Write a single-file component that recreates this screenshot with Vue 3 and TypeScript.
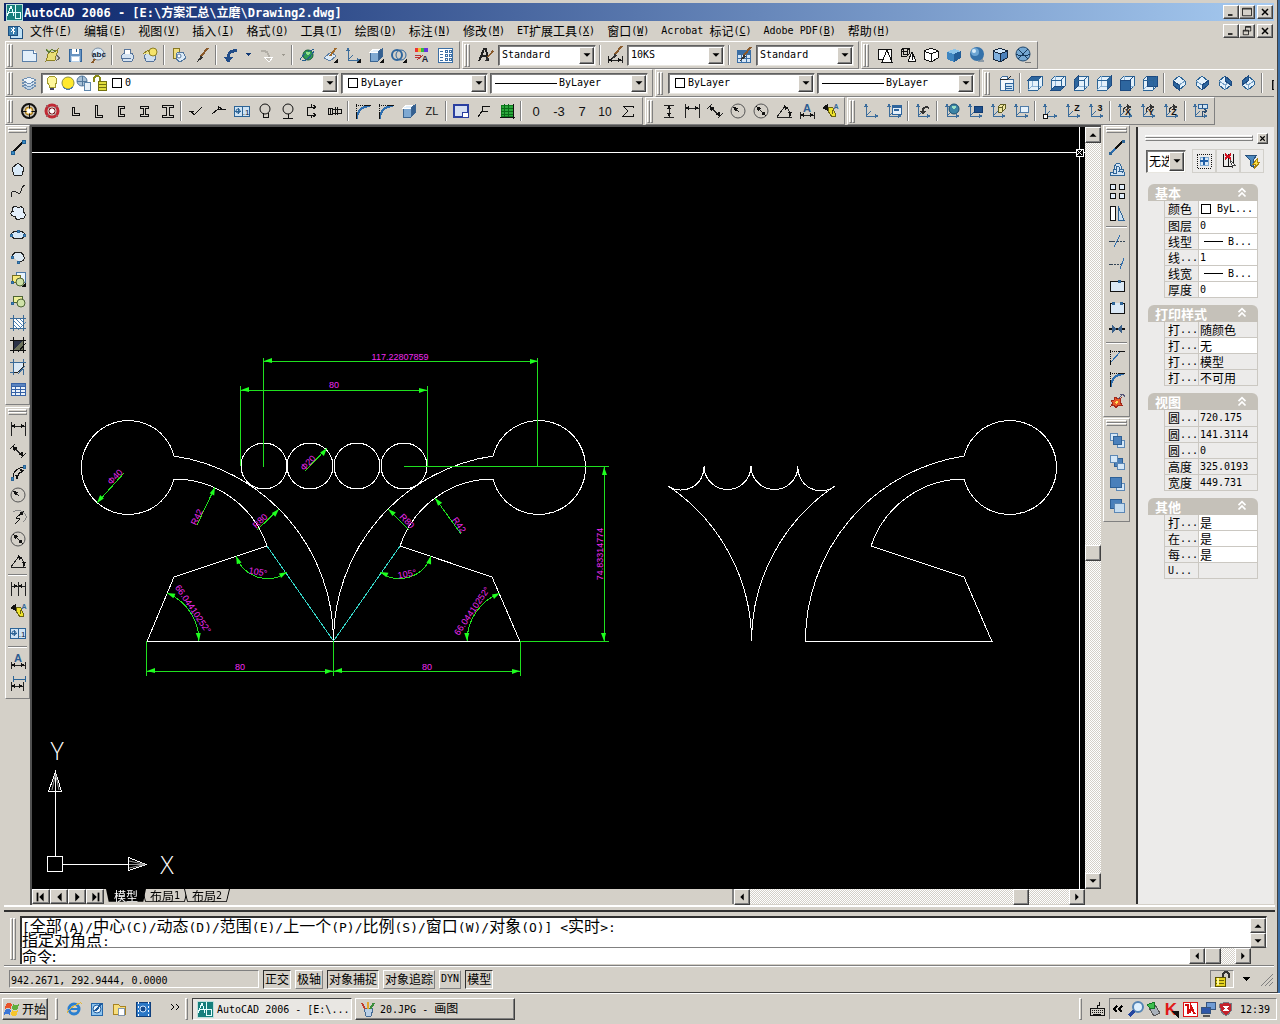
<script setup lang="ts">
import { h, ref } from 'vue'

/* Latin runs use a fixed-pitch face at half the width of a Han character. */
const T = (p: { s: string }) =>
  (p.s.match(/[\x20-\x7e]+|[^\x20-\x7e]+/g) ?? []).map((run) =>
    h('span', { class: /^[\x20-\x7e]/.test(run) ? 'latin' : 'han' }, run),
  )
T.props = ['s']

const DARK = '#222'
const BLUE = '#2c6496'
const PALE = '#cfe3f4'
const path = (d: string, stroke = DARK, fill = 'none', w = 1) =>
  `<path d="${d}" fill="${fill}" stroke="${stroke}" stroke-width="${w}"/>`
const dots = (d: string, stroke = DARK, gap = '1 1') =>
  `<path d="${d}" fill="none" stroke="${stroke}" stroke-dasharray="${gap}"/>`
const circ = (x: number, y: number, r: number, stroke = DARK, fill = 'none', w = 1) =>
  `<circle cx="${x}" cy="${y}" r="${r}" fill="${fill}" stroke="${stroke}" stroke-width="${w}" shape-rendering="auto"/>`
const box = (x: number, y: number, w: number, ht: number, stroke = DARK, fill = 'none') =>
  `<rect x="${x}" y="${y}" width="${w}" height="${ht}" fill="${fill}" stroke="${stroke}"/>`
const word = (x: number, y: number, s: string, size: number, fill = DARK, weight = 400) =>
  `<text x="${x}" y="${y}" font-size="${size}" fill="${fill}" font-weight="${weight}" text-anchor="middle" font-family="Liberation Sans, sans-serif">${s}</text>`

const faces: Record<string, string> = {
  top: 'M1 5L5 1H15L11 5z', bottom: 'M1 15L5 11H15L11 15z', left: 'M1 5L5 1V11L1 15z',
  right: 'M11 5L15 1V11L11 15z', front: 'M1 5H11V15H1z', back: 'M5 1H15V11H5z',
}
const viewCube = (f: string) =>
  path('M1 5L5 1H15V11L11 15H1z', BLUE, '#e4f1fb') + path('M5 1V11H15M5 11L1 15', '#8db4d6') +
  path(faces[f], '#1d4a80', '#2d669f') + path('M1 5H11V15M11 5L15 1', f === 'front' ? '#1d4a80' : BLUE)
const isoFaces: Record<string, string> = {
  sw: 'M2 6L8 10V15L2 10z', se: 'M14 6L8 10V15L14 10z', ne: 'M8 1L14 6V10L8 6z', nw: 'M8 1L2 6V10L8 6z',
}
const isoCube = (f: string) =>
  path('M8 1L14 6V10L8 15L2 10V6z', BLUE, '#e4f1fb') + path('M2 6L8 10L14 6M8 10V15', '#7ba4c8') +
  path(isoFaces[f], '#1d4a80', '#2d669f')
const ucs = (extra = '') =>
  path('M3 2V13H14M3 13L8 8', '#3c6d9c') + path('M3 0L5 4H1zM16 13L12 11V15z', 'none', '#3c6d9c') + extra
const dimH = path('M1 1V15M15 1V15M1 5H15') + path('M1 5L5 3V7zM15 5L11 3V7z', 'none', '#111')
const solid = path('M2 5L6 2H14V10L10 14H2z', '#3b6592', '#7fa9d2') + path('M2 5L6 2H14L10 5z', '#fff', '#e2effa') + path('M10 5V14L14 10V2z', '#3b6592', '#345f90')
const corner = path('M11 16H16V11z', 'none', '#111')
const brush = (x = 0, y = 0) => `<g transform="translate(${x} ${y})">${path('M14 1L7 9', '#8a5a2b', 'none', 2)}${path('M7 8L3 15L9 11z', 'none', '#333')}</g>`
const hatch = path('M3 0V16M13 0V16M0 3H16M0 13H16', '#3a6a98')
const aligned = path('M0 6L5 1M11 15L16 10M3 4L13 13') + path('M2 3L8 5L4 8zM14 13L8 12L12 8z', 'none', '#111')
const leader = path('M1 5L5 2V7zM3 5L9 6', '#111', '#111') + path('M6 4L11 5L14 13L10 14L6 8z', '#6b6410', '#efe32b') + path('M10 7V11', '#6b6410') + word(14, 6, 'A', 7, BLUE, 700)
const tolerance = box(0, 3, 15, 10, BLUE, PALE) + path('M8 3V13M4 5V11M1 8H7', BLUE) + circ(4, 8, 2, BLUE) + word(12, 12, '.1', 8, '#123')
const angle = path('M1 14H16M1 14L9 3') + path('M9 3Q14 6 14 14') + path('M8 2L13 5L9 7zM14 14L12 9H16z', 'none', '#111')
const textDim = word(8, 9, 'A', 11, '#2d5c91', 700) + path('M1 9V16M15 9V16M1 12H15') + path('M1 12L5 10V14zM15 12L11 10V14z', 'none', '#111')
const radius = circ(8, 8, 7, '#555') + path('M9 9L4 5') + path('M3 4L8 5L5 8z', 'none', '#111')
const diameter = circ(8, 8, 7, '#555') + path('M4 4L12 12') + path('M3 3L8 5L5 8zM13 13L8 11L11 8z', 'none', '#111')
const spin = path('M6 9Q6 3 12 4', '#333') + path('M10 1L15 4L10 7z', 'none', '#333')

const icons: Record<string, string> = {
  new: path('M1 3H12L15 6V14H1z', '#5b7fa8', '#e3effa') + path('M12 3V6H15', '#5b7fa8', '#fff'),
  open: path('M2 14L5 4L9 6L14 2L11 13z', '#8d8022', '#eadf77') + path('M2 2L5 6L8 2L12 5', '#5d7a3c', '#b6cc80') + path('M12 8L16 11L12 14', '#666'),
  save: box(2, 2, 12, 12, '#33659c', '#6793c1') + box(5, 2, 6, 4, '#fff', '#fff') + box(4, 9, 8, 5, '#b9d2ea', '#fff') + path('M9 2V5', BLUE),
  spelling: circ(8, 7, 6, '#7b8fa5', '#dcebf7') + word(9, 10, 'abc', 8, '#123', 700) + path('M5 12L2 16', '#8a5a2b', 'none', 2),
  print: path('M2 9L5 6H13L15 10L13 14H4z', '#56749b', '#d5e3f1') + path('M5 7L6 2H11L12 7', '#56749b', '#fff') + path('M4 11H12', '#56749b'),
  preview: path('M2 9L5 6H12L14 11L12 14H4z', '#56749b', '#cfdff0') + circ(11, 5, 4, '#8d7f25', '#f5e36b') + path('M1 7L6 3L8 7', '#8d7f25', '#ede38d'),
  publish: path('M2 2L8 1L10 11L3 12z', '#887822', '#f0df81') + path('M6 6L12 5L15 11L9 15L5 12z', '#54789f', '#dcebf8') + circ(8, 9, 2, '#54789f', '#fff'),
  match: brush(),
  undo: path('M6 15C4 8 6 3 14 4', '#214c88', 'none', 3) + path('M1 10H10L5 16z', 'none', '#214c88'),
  redo: path('M10 14C12 8 10 3 3 4', '#b2aea6', 'none', 2) + path('M6 10H15L11 15z', '#fff', '#c6c2ba'),
  drop: path('M5 6H11L8 9z', 'none', '#123a75'),
  dropOff: path('M6 7H10L8 9z', 'none', '#9c988f'),
  web: circ(9, 8, 5, '#165b36', '#2f9b55') + path('M1 13Q4 6 15 2M3 14Q9 14 15 4', '#245d8c') + path('M6 6Q9 3 11 6L9 9z', 'none', '#8fe08c'),
  sheet: path('M2 11L9 5L14 9L8 14z', '#5d7fa5', '#dfecf8') + path('M14 1L8 9', '#a06a2c', 'none', 2) + corner,
  ucsFly: ucs() + corner,
  solidFly: solid + corner,
  rings: circ(6, 8, 5, '#2f669d', 'none', 2) + circ(10, 8, 5, '#2f669d') + corner,
  props: box(1, 1, 3, 4, 'none', '#e33') + box(4, 1, 3, 4, 'none', '#eb3') + box(7, 1, 3, 4, 'none', '#3b4') + box(10, 1, 4, 4, 'none', '#63d') + path('M1 8H7M1 10H7M3 13L9 8', '#b33') + word(11, 15, 'A', 9, '#223', 700),
  calc: box(1, 1, 14, 14, '#3b6fa5', '#fff') + path('M3 4H6M3 7H6M3 10H6M3 13H6', '#3b6fa5') + box(8, 3, 2, 2, '#3b6fa5') + box(12, 3, 2, 2, '#3b6fa5') + box(8, 7, 2, 2, '#3b6fa5') + box(12, 7, 2, 2, '#3b6fa5') + box(8, 11, 2, 2, '#3b6fa5') + box(12, 11, 2, 2, '#3b6fa5'),
  textStyle: path('M1 14L6 2H8L10 14M3 9H9', DARK, 'none', 2) + `<g transform="translate(4 3) scale(.8)">${brush()}</g>`,
  dimStyle: path('M1 9V16M15 9V16M1 13H15') + path('M1 13L5 11V15zM15 13L11 11V15z', 'none', '#111') + brush(1, -2),
  tableStyle: box(1, 3, 13, 12, '#3b6fa5', '#d5e6f6') + path('M1 7H14M1 11H14M5 3V15M10 3V15', '#3b6fa5') + box(1, 3, 13, 3, '#3b6fa5', '#3b6fa5') + brush(1, -1),
  wire2: box(1, 2, 13, 10, '#111', '#fff') + path('M5 15L10 3L15 15z', '#111', '#fff', 1),
  wire3: path('M1 4L3 1H9V7L7 9H1zM1 4H7V9M7 4L9 1M3 1V7H9', '#111') + path('M8 14L12 5L16 14Q12 16 8 14M12 5V13', '#111', '#fff'),
  hidden: path('M1 4L8 1L15 4V11L8 15L1 12z', '#111', '#fff') + path('M1 4L8 7L15 4M8 7V15', '#111'),
  flat: path('M1 5L8 2L15 4V11L8 15L1 12z', 'none', '#3f86c1') + path('M1 5L8 2L15 4L8 7z', 'none', '#8cc4ea') + path('M8 7L15 4V11L8 15z', 'none', '#235f9a'),
  gour: path('M8 15H15L14 10', 'none', '#8c9aa6') + circ(8, 7, 7, 'none', '#3572aa') + circ(6, 5, 4, 'none', '#6ca5d3') + circ(5, 4, 2, 'none', '#d6ecfb'),
  flatEdge: path('M1 4L8 1L15 4V11L8 15L1 12z', '#14263c', '#7fb0de') + path('M1 4L8 1L15 4L8 7z', '#14263c', '#cfe5f8') + path('M8 7L15 4V11L8 15z', '#14263c', '#4a80ba'),
  gourEdge: circ(8, 7, 7, '#20476d', '#76a9d3') + path('M3 2L13 12M13 2L3 12M1 7Q8 11 15 7', '#173a5c') + path('M10 15H16', '#777'),
  layers: path('M1 11L9 8L15 11L8 15z', '#6f8fb2', '#c1d5e8') + path('M1 8L9 5L15 8L8 12z', '#6f8fb2', '#d6e4f2') + path('M1 5L8 2L15 5L8 9z', '#6f8fb2', '#ecf4fb'),
  bulb: path('M5 10C1 5 4 1 8 1S15 5 11 10V12H5z', '#a29a2e', '#fff79b') + path('M6 14H10', '#446', 'none', 2),
  sun: circ(8, 8, 6, '#8a8f3f', '#ffe92e', 1) + path('M3 12Q8 17 13 12', '#487db0'),
  sunVp: circ(6, 6, 5, '#52779b', '#a8c1d6') + path('M6 1V11M1 6H11', '#52779b') + box(8, 7, 6, 8, '#5e86ab', '#e8f1f8'),
  lock: path('M2 7V4Q2 1 5 1T8 4V6', '#8a8a16', 'none', 2) + box(6, 6, 8, 9, '#74720e', '#e1dc3b') + path('M6 9H14M6 12H14', '#74720e'),
  white: box(4, 3, 9, 9, '#000', '#fff'),
  named: path('M2 4L5 1H9L10 4H15V15H2z', '#3f6d9c', '#f2f7fc') + path('M2 4H10L13 1', DARK) + box(7, 8, 8, 7, '#2e649c', '#cfe3f4') + path('M8 11H14M8 13H14', '#2e649c'),
  camera: box(3, 5, 6, 9, '#111', '#777') + path('M5 3H9', '#111', 'none', 2),
  gear1: circ(8, 8, 7, '#111', '#c9c4ba', 2) + circ(8, 8, 4, '#9a7420', '#f2c763') + path('M8 0V16M0 8H16', '#111') + circ(8, 8, 2, '#fff', '#fff'),
  gear2: circ(8, 8, 6, '#c02a35', '#cfcbc4', 3) + circ(8, 8, 3, '#7c0e18', '#e7dfdc') + path('M2 2L14 14M14 2L2 14', '#8b6a70') + circ(8, 8, 2, '#fff', '#fff'),
  angleS: path('M5 4H7V10H12V12H5z', '#111'), angleL: path('M5 2H7V12H12V14H5z', '#111'),
  channel: path('M11 3H5V13H11V11H7V5H11z', '#111'), beamS: path('M4 3H12V5H9V11H12V13H4V11H7V5H4z', '#111'),
  beamL: path('M3 2H14V4H10V12H14V14H3V12H7V4H3z', '#111'),
  surf: path('M1 8H6M3 8L6 12L14 4', '#111'), weld: path('M1 11L7 6H15M7 6V3L11 6', '#111'),
  datum: circ(8, 6, 5, '#111') + path('M6 10V14H11V10', '#111'), datum2: circ(8, 6, 5, '#111') + path('M8 11V15M3 15H13', '#111'),
  cut: path('M4 4V12M4 4H12M4 12H12M10 2L13 4L10 6M10 10L13 12L10 14M8 1V4M8 12V15', '#111'),
  bolt: path('M2 5H6V11H2zM6 6H15V10H6M9 4V12M11 4V12M4 5V11', '#111'),
  fillet: path('M2 16Q2 4 15 3', '#2f6fb0', 'none', 2) + dots('M1 2H16M1 1V12', '#111') + path('M10 2H16M1 10V16', '#111'),
  chamfer: path('M2 13L11 3', '#2f6fb0') + dots('M1 2H16M1 1V12', '#111') + path('M10 2H16M1 12V16', '#111'),
  block: solid, zl: word(8, 12, 'ZL', 11, '#111'),
  layout: path('M1 2H15V14H1z', '#2a3fa0', '#d6e0f2', 2) + box(9, 9, 6, 5, '#2a3fa0', '#fff'),
  leadF: path('M2 14L6 8V3H14M6 8H12', '#111'),
  grid: box(2, 2, 12, 11, '#0c7a1c', '#2aa83b') + path('M2 5H14M2 8H14M2 11H14M5 1V15M9 1V15', '#0a6a18') + path('M14 1V16M1 14H16', '#111'),
  n0: word(8, 13, '0', 13, '#111'), n3: word(8, 13, '-3', 13, '#111'), n7: word(8, 13, '7', 13, '#111'),
  n10: word(8, 13, '10', 12, '#111'), sum: path('M13 5V3H3L8 8L3 13H13V11', '#111'),
  dimV: path('M3 2H13M3 14H13M8 2V14') + path('M8 2L6 6H10zM8 14L6 10H10z', 'none', '#111'),
  dimH, aligned, radius, diameter, angle, textDim, leader, tolerance,
  ucs: ucs(), ucsDlg: ucs(box(6, 2, 9, 9, '#2e649c', '#e5f0fa') + path('M6 4H15M8 7H13', '#2e649c', 'none', 2)),
  ucsPrev: ucs(path('M8 10C7 5 10 3 14 5', '#333', 'none', 2) + path('M5 8H11L8 12z', 'none', '#333')),
  ucsWorld: ucs(circ(10, 6, 5, '#174b6e', '#3b83a5') + path('M7 4Q10 1 12 4L10 7z', 'none', '#9be0c4')),
  ucsObj: ucs(box(7, 3, 8, 6, '#123b70', '#1d4f8c')),
  ucsFace: ucs(path('M8 4L11 1H15V6L12 9H8z', '#5d5b22', '#efe6a0') + path('M8 4H12V9M12 4L15 1', '#5d5b22')),
  ucsView: ucs(box(7, 3, 8, 6, '#4f7ba7', '#e5f1fb')), ucsOrigin: ucs(box(1, 11, 4, 4, '#111', '#fff')),
  ucsZ: ucs(word(12, 8, 'Z', 9, '#111', 700)), ucs3: ucs(word(12, 8, '3', 9, '#111', 700)),
  rotX: ucs(word(11, 12, 'X', 9, '#111', 700) + spin),
  rotY: ucs(word(11, 12, 'Y', 9, '#111', 700) + spin),
  rotZ: ucs(word(11, 12, 'Z', 9, '#111', 700) + spin),
  ucsApply: ucs(box(6, 1, 9, 4, '#2e649c', '#cfe3f4') + path('M10 1V5M10 14V8H14M12 6L15 8L12 10', '#2b4c70')),
  line: path('M3 13L13 3', '#111', 'none', 2) + box(1, 12, 3, 3, '#1f5f93', '#3a8cc4') + box(12, 1, 3, 3, '#1f5f93', '#3a8cc4'),
  polygon: path('M8 2L14 7L12 14H4L2 7z', '#222', '#d9e9f7'),
  spline: path('M1 14C2 0 9 16 11 8Q12 3 15 2', '#222'),
  cloud: path('M5 11C0 12 0 6 3 6C0 2 6 0 8 3C12 0 15 4 13 7C17 9 15 15 11 13C9 17 5 14 5 11', '#222', '#e4effa', 1),
  ellipse: `<ellipse cx="8" cy="8" rx="7" ry="4" fill="#d4e6f6" stroke="#222"/>` + box(0, 7, 2, 2, BLUE, '#3a8cc4') + box(13, 7, 2, 2, BLUE, '#3a8cc4') + box(7, 3, 2, 2, BLUE, '#3a8cc4'),
  ellArc: path('M2 8Q3 3 8 3T14 8T9 12', '#222', '#dde9f3') + box(1, 7, 2, 2, BLUE, '#3a8cc4') + box(7, 12, 2, 2, BLUE, '#3a8cc4'),
  insert: box(6, 1, 9, 10, '#4f7ba7', '#e7f2fb') + box(2, 4, 8, 7, '#756e1f', '#f7ea7e') + circ(10, 11, 4, '#4c6333', '#cfe1a8') + box(1, 10, 2, 2, BLUE, '#3a8cc4') + corner,
  makeBlock: box(3, 3, 9, 6, '#4c6333', '#eef099') + circ(11, 10, 4, '#4c6333', '#cfe1a8') + box(1, 9, 2, 2, BLUE, '#3a8cc4'),
  hatch: box(3, 3, 10, 10, '#fff', '#fff') + path('M3 9L7 13M3 5L11 13M5 3L13 11M9 3L13 7M8 15L16 7', '#4f81b0') + hatch,
  gradient: box(3, 3, 10, 10, '#111', '#6d725b') + path('M3 3H13L3 13z', 'none', '#2b3247') + path('M3 0V16M13 0V16M0 3H16M0 13H16M8 15L16 6', '#111'),
  region: path('M3 3H13V8L8 13H3z', '#222', '#dbe9f6') + path('M3 0V16M0 3H16M13 0V3M0 13H3M8 15L15 7M13 10V16', '#3a6a98'),
  table: box(1, 2, 14, 12, '#3662a6', '#eaf2fb') + box(1, 2, 14, 3, '#3662a6', '#5b84c0') + path('M1 8H15M1 11H15M5 5V14M10 5V14', '#3662a6'),
  arcLen: path('M3 13Q3 4 13 2', '#111') + path('M7 14Q7 8 13 6', '#111') + path('M7 15L5 10H9zM14 5L10 4L11 8z', 'none', '#111') + box(1, 12, 2, 3, BLUE, '#3a8cc4') + box(13, 0, 2, 3, BLUE, '#3a8cc4'),
  jog: path('M3 3Q9 -1 14 4T13 13', '#888') + path('M5 15L10 10L6 9L13 3', '#111') + path('M14 2L9 4L12 7z', 'none', '#111'),
  quick: path('M1 1V15M8 1V15M15 1V15M1 5H15') + path('M8 5L4 3V7zM8 5L12 3V7z', 'none', '#111'),
  dimUpd: path('M3 1V7M15 1V7M3 4H15', BLUE) + path('M1 7V16M13 7V16M1 11H13') + path('M1 11L5 9V13zM13 11L9 9V13z', 'none', '#111'),
  lineMod: path('M2 14L6 10', '#2f6fb0', 'none', 2) + path('M6 10L13 3', '#111', 'none', 2) + box(13, 1, 2, 2, BLUE, BLUE) + box(0, 13, 2, 2, BLUE, BLUE),
  offset: path('M1 14V11H4Q4 8 6 8Q5 2 9 2T12 8Q15 8 15 11V14z', '#2f6496', '#d2e4f4') + path('M4 12H7V9Q7 5 9 5T10 10H13V12', '#2f6496'),
  array: box(1, 1, 5, 5, '#111', '#e2eefa') + box(10, 1, 5, 5, '#111', '#e2eefa') + box(1, 10, 5, 5, '#111', '#e2eefa') + box(10, 10, 5, 5, '#111', '#e2eefa'),
  mirror: path('M1 1H6V15H1z', '#111', '#fff') + path('M9 1V15H15z', '#2f6496', '#cbdff1'),
  trim: path('M0 8H6', '#345') + dots('M8 8H16', '#345', '2 1') + path('M5 14L11 2', '#2f6fb0'),
  extend: path('M0 9H4', '#345') + dots('M5 9H12', '#345', '2 1') + path('M11 14L15 3', '#2f6fb0'),
  breakPt: box(1, 4, 14, 10, '#111', '#dbe9f6') + box(9, 3, 2, 2, BLUE, '#3a6da3'),
  breakAt: path('M4 4H1V14H15V4H12', '#111', '#dbe9f6') + box(3, 3, 2, 2, BLUE, '#3a6da3') + box(11, 3, 2, 2, BLUE, '#3a6da3'),
  join: path('M0 8H16', '#111', 'none', 2) + path('M8 8L3 4V12zM8 8L13 4V12z', 'none', '#3b618b'),
  explode: path('M2 8L5 7L6 4L9 6L12 5L11 9L13 12L9 12L7 15L5 12L2 13L4 10z', '#a3271a', '#e85a2a') + path('M5 9L9 8L8 12z', 'none', '#ffe35a') + path('M9 6L14 1M14 1L16 4M14 1L11 2', '#557'),
  front: box(1, 1, 7, 7, '#5c87b4', '#d5e7f7') + box(8, 8, 7, 7, '#5c87b4', '#d5e7f7') + box(4, 4, 8, 8, '#2e6096', '#4a80bb'),
  back: box(5, 4, 8, 8, '#2e6096', '#4a80bb') + box(1, 1, 7, 7, '#5c87b4', '#d5e7f7') + box(8, 9, 7, 6, '#5c87b4', '#d5e7f7'),
  above: box(7, 7, 8, 7, '#5c87b4', '#d5e7f7') + box(1, 1, 11, 10, '#2e6096', '#4a80bb'),
  under: box(1, 1, 11, 9, '#2e6096', '#4a80bb') + box(5, 5, 10, 9, '#5c87b4', '#c5dcf0'),
  pickAdd: dots('M1 1H15V15H1z', '#111') + box(4, 4, 8, 8, '#7fa9d2', '#d5e7f7') + path('M8 4V12M4 8H12', '#205ea6', 'none', 2),
  pickObj: path('M3 1V13H13M13 1V13M8 1V13', '#111') + path('M5 1L11 6M11 1L5 6', '#d01020', 'none', 2) + path('M10 7L15 12L12 12L13 15z', '#444', '#fff'),
  quickSel: path('M1 2H13L9 7V14L6 12V7z', '#27517c', '#4d88be') + path('M13 6L9 11H12L10 16L16 9H13z', '#a78312', '#ffe23c'),
  acad: box(0, 0, 16, 16, '#bfe0dd', '#167f7c') + path('M1 12L5 2L8 12M3 8H11M9 1V8H15M9 8V14H14V9', '#e8ffff'),
  doc: path('M2 3H11L14 6V15H2z', '#1d4f80', '#bfe0f4') + path('M0 3H9V12H0z', '#1d4f80', '#3a80b0') + path('M3 5L7 9M7 5L3 9M5 4V11', '#fff'),
  flag: path('M2 3Q5 1 8 3L7 8Q4 6 1 8z', 'none', '#e8532a') + path('M9 3Q12 5 15 3L14 8Q11 10 8 8z', 'none', '#5fae3c') + path('M1 9Q4 7 7 9L6 14Q3 12 0 14z', 'none', '#3c77d6') + path('M8 9Q11 11 14 9L13 14Q10 16 7 14z', 'none', '#f5c52c'),
  ie: circ(8, 8, 5, '#2a7fd0', 'none', 3) + path('M4 8H12', '#2a7fd0', 'none', 2) + path('M1 13Q0 10 8 5T15 3', '#e2b83a'),
  desktop: box(2, 2, 11, 12, '#2467ab', '#8ec4ee') + circ(8, 8, 4, '#1e5a9c', '#e8f4fd') + path('M6 10L13 2', '#1e5a9c', 'none', 2),
  folder: path('M1 3H6L8 5H13V13H1z', '#a88320', '#f8de7c') + path('M6 7H12V14H6z', '#8397ad', '#fff'),
  media: box(1, 1, 14, 14, '#103f7c', '#2b77c5') + dots('M3 1V15M13 1V15', '#fff', '2 2') + circ(8, 8, 3, '#cfe6ff', '#164a8d'),
  paint: path('M4 7L13 8L11 15H6z', '#446a94', '#b9cfe6') + path('M5 8L2 2', '#c13a2b', 'none', 2) + path('M8 8V1', '#e3a42a', 'none', 2) + path('M10 8L14 2', '#3b8d3c', 'none', 2),
  keyboard: path('M1 7H15V14H1zM8 7V4H10V1', '#111') + dots('M3 9H14M3 11H14', '#111') + path('M4 13H12', '#111'),
  search: circ(10, 6, 5, '#5585b5', '#dff1ff', 2) + path('M6 10L1 15', '#2447a0', 'none', 3),
  plug: path('M3 7L9 4L14 12L8 15z', '#555', '#a9b1ba') + path('M1 4L8 1L9 7L5 8z', '#157a26', '#3fbe4e'),
  kasper: word(7, 14, 'K', 17, '#e01818', 700) + path('M8 10H14V16zM8 10L14 15', '#111', '#111'),
  avira: box(1, 1, 14, 14, '#e01414', '#fff') + path('M3 4H6V13M8 12L9 5L12 12M10 9L13 13', '#d40d0d', 'none', 2),
  net: box(6, 1, 9, 7, '#36547e', '#6f9bd4') + box(1, 6, 9, 6, '#36547e', '#2e57a8') + path('M3 15H10', '#555', 'none', 2),
  shield: path('M8 1L14 3Q15 11 8 15Q1 11 2 3z', '#757b85', '#c3222c') + path('M6 5L10 10M10 5L6 10', '#fff', 'none', 2),
  lockTray: path('M9 7V4Q9 1 12 1T15 5V7', '#333', 'none', 2) + box(1, 6, 10, 9, '#5d5403', '#e5d322') + path('M2 9H10M2 12H10', '#6e6405') + path('M4 7V14', '#fff9a0', 'none', 2),
  first: path('M11 3L6 8L11 13z', 'none', '#000') + path('M4 3V13', '#000', 'none', 2), prev: path('M11 3L6 8L11 13z', 'none', '#000'),
  next: path('M6 3L11 8L6 13z', 'none', '#000'), last: path('M5 3L10 8L5 13z', 'none', '#000') + path('M12 3V13', '#000', 'none', 2),
  up: path('M4 10H12L8 6z', 'none', '#000'), down: path('M4 6H12L8 10z', 'none', '#000'),
  left: path('M10 4V12L6 8z', 'none', '#000'), rightA: path('M6 4V12L10 8z', 'none', '#000'),
  min: path('M4 12H10', '#000', 'none', 2), max: path('M2 3H14V13H2zM2 4H14', '#000'), close: path('M4 4L12 12M12 4L4 12', '#000', 'none', 2),
  restore: path('M6 2H13V8H11M6 3H13M3 7H10V13H3zM3 8H10M6 2V7', '#000'),
  more: path('M3 3L6 6L3 9M8 3L11 6L8 9', '#000', 'none', 1), less: path('M7 5L4 8L7 11M12 5L9 8L12 11', '#000', 'none', 2),
  chev: path('M4 7L8 3L12 7M4 12L8 8L12 12', '#fff', 'none', 2),
  sizer: path('M3 15L15 3M7 15L15 7M11 15L15 11', '#808080', 'none', 1),
}
for (const f of Object.keys(faces)) icons['v_' + f] = viewCube(f)
for (const f of Object.keys(isoFaces)) icons['i_' + f] = isoCube(f)

interface Combo { w: number; text: string; name: string; icons?: string[]; stroke?: boolean }
const combos: Record<string, Combo> = {
  '#text': { w: 98, text: 'Standard', name: 'Text style' },
  '#dim': { w: 98, text: '10KS', name: 'Dimension style' },
  '#table': { w: 98, text: 'Standard', name: 'Table style' },
  '#layer': { w: 298, text: '0', name: 'Layer', icons: ['bulb', 'sun', 'sunVp', 'lock', 'white'] },
  '#color': { w: 147, text: 'ByLayer', name: 'Color', icons: ['white'] },
  '#ltype': { w: 158, text: 'ByLayer', name: 'Linetype', stroke: true },
  '#color2': { w: 147, text: 'ByLayer', name: 'Plot color', icons: ['white'] },
  '#lweight': { w: 158, text: 'ByLayer', name: 'Lineweight', stroke: true },
}
const rows = [
  ['new open save spelling | print preview | publish match | undo drop redo dropOff | web sheet ucsFly solidFly rings props calc',
    'textStyle #text | dimStyle #dim | tableStyle #table', 'wire2 wire3 hidden flat gour flatEdge gourEdge'],
  ['layers #layer #color #ltype', '#color2 #lweight',
    'named | v_top v_bottom v_left v_right v_front v_back | i_sw i_se i_ne i_nw | camera'],
  ['gear1 gear2 angleS angleL channel beamS beamL | surf weld tolerance datum datum2 cut bolt | fillet fillet block zl | layout leadF grid | n0 n3 n7 n10 sum',
    'dimV dimH aligned radius diameter angle textDim leader',
    'ucs ucsDlg | ucsPrev | ucsWorld ucsObj ucsFace ucsView | ucsOrigin ucsZ ucs3 | rotX rotY rotZ | ucsApply'],
].map((r) => r.map((b) => b.split(' ')))
const leftBars = [
  'line polygon spline cloud ellipse ellArc insert makeBlock hatch gradient region table',
  'dimH aligned arcLen radius jog diameter angle | quick leader tolerance | textDim dimUpd',
].map((b) => b.split(' '))
const rightBars = [
  'lineMod offset array mirror | trim extend breakPt breakAt join | chamfer fillet explode',
  'front back above under',
].map((b) => b.split(' '))

const menus = [
  ['文件', 'F'], ['编辑', 'E'], ['视图', 'V'], ['插入', 'I'], ['格式', 'O'], ['工具', 'T'], ['绘图', 'D'],
  ['标注', 'N'], ['修改', 'M'], ['ET扩展工具', 'X'], ['窗口', 'W'], ['Acrobat 标记', 'C'], ['Adobe PDF', 'B'], ['帮助', 'H'],
]

interface Prop { k: string; v: string; edit?: boolean; mark?: 'box' | 'line' }
const groups: { title: string; rows: Prop[] }[] = [
  { title: '基本', rows: [
    { k: '颜色', v: 'ByL...', edit: true, mark: 'box' }, { k: '图层', v: '0', edit: true },
    { k: '线型', v: 'B...', edit: true, mark: 'line' }, { k: '线...', v: '1', edit: true },
    { k: '线宽', v: 'B...', edit: true, mark: 'line' }, { k: '厚度', v: '0', edit: true } ] },
  { title: '打印样式', rows: [
    { k: '打...', v: '随颜色' }, { k: '打...', v: '无', edit: true }, { k: '打...', v: '模型' }, { k: '打...', v: '不可用' } ] },
  { title: '视图', rows: [
    { k: '圆...', v: '720.175' }, { k: '圆...', v: '141.3114' }, { k: '圆...', v: '0' }, { k: '高度', v: '325.0193' }, { k: '宽度', v: '449.731' } ] },
  { title: '其他', rows: [
    { k: '打...', v: '是', edit: true }, { k: '在...', v: '是', edit: true }, { k: '每...', v: '是', edit: true }, { k: 'U...', v: '' } ] },
]

const modes = ref([
  { s: '正交', on: true }, { s: '极轴', on: false }, { s: '对象捕捉', on: true },
  { s: '对象追踪', on: false }, { s: 'DYN', on: false }, { s: '模型', on: true },
])
const command = ref('命令:')

/* Dimension arrowheads: tip x, tip y, direction in degrees. */
const arrows = [
  [264, 361, 180], [538, 361, 0], [241, 390, 180], [427, 390, 0], [604, 467, -90], [604, 641, 90],
  [147, 671, 180], [333, 671, 0], [334, 671, 180], [520, 671, 0], [97, 503, 132], [327, 448, -48],
  [215, 487, -64], [279, 509, -44], [388, 509, -136], [435, 498, -126], [236, 556, -110], [287, 572, -25],
  [431, 556, -70], [380, 572, -155], [167, 593, -155], [199, 641, 88], [500, 593, -25], [467, 641, 92],
]
/* Dimension labels: centre x, centre y, angle, text. */
const labels: [number, number, number, string][] = [
  [400, 357, 0, '117.22807859'], [334, 385, 0, '80'], [240, 667, 0, '80'], [427, 667, 0, '80'],
  [600, 554, -90, '74.83314774'], [115, 477, -47, 'Φ40'], [308, 463, -47, 'Φ20'], [197, 517, -64, 'R42'],
  [260, 521, -44, 'R80'], [407, 521, 46, 'R80'], [459, 525, 54, 'R42'], [258, 572, 10, '105°'],
  [407, 574, -10, '105°'], [193, 609, 56, '66.04410252°'], [472, 611, -56, '66.04410252°'],
]
</script>

<template>
  <div class="desktop">
    <div class="window">
      <header class="title">
        <svg class="ic" viewBox="0 0 16 16" v-html="icons.acad" />
        <h1><T s="AutoCAD 2006 - [E:\方案汇总\立磨\Drawing2.dwg]" /></h1>
        <button v-for="b in ['min', 'max', 'close']" :key="b" class="cap" :class="b" :aria-label="b">
          <svg viewBox="0 0 16 16" v-html="icons[b]" />
        </button>
      </header>

      <nav class="menu">
        <svg class="ic" viewBox="0 0 16 16" v-html="icons.doc" />
        <button v-for="m in menus" :key="m[1]" class="item">
          <T :s="m[0]" /><span class="latin">(<u>{{ m[1] }}</u>)</span>
        </button>
        <span class="grow" />
        <button v-for="b in ['min', 'restore', 'close']" :key="b" class="cap" :class="b" :aria-label="'document ' + b">
          <svg viewBox="0 0 16 16" v-html="icons[b]" />
        </button>
      </nav>

      <div v-for="(row, ri) in rows" :key="ri" class="row">
        <div v-for="(bar, bi) in row" :key="bi" class="bar">
          <span class="grip"><i /><i /></span>
          <template v-for="(it, i) in bar" :key="i">
            <span v-if="it === '|'" class="sep" />
            <div v-else-if="combos[it]" class="combo" :style="{ width: combos[it].w + 'px' }">
              <svg v-for="n in combos[it].icons ?? []" :key="n" class="ic" viewBox="0 0 16 16" v-html="icons[n]" />
              <span v-if="combos[it].stroke" class="stroke" />
              <select :aria-label="combos[it].name"><option>{{ combos[it].text }}</option></select>
              <span class="arrow raised"><svg viewBox="0 0 16 16" v-html="icons.down" /></span>
            </div>
            <button v-else class="tool" :class="{ narrow: it.startsWith('drop') }" :aria-label="it">
              <svg class="ic" viewBox="0 0 16 16" v-html="icons[it]" />
            </button>
          </template>
        </div>
      </div>

      <div class="main">
        <aside class="side">
          <div v-for="(bar, bi) in leftBars" :key="bi" class="vbar">
            <span class="vgrip"><i /><i /></span>
            <template v-for="(it, i) in bar" :key="i">
              <span v-if="it === '|'" class="vsep" />
              <button v-else class="vtool" :aria-label="it"><svg class="ic" viewBox="0 0 16 16" v-html="icons[it]" /></button>
            </template>
          </div>
        </aside>

        <section class="doc">
          <div class="view">
            <svg class="canvas" viewBox="32 127 1054 762" preserveAspectRatio="xMinYMin slice">
              <g class="white-line">
                <path d="M32 152.500H1076M1083 152.500H1086M1079.500 127V149M1079.500 156V889M1076 149h7v7h-7zM1077 150l5 5M1082 150l-5 5" />
                <path d="M174 456A47 47 0 1 0 174 479A98 98 0 0 1 267 546L174 577L147 641.500H520L492 577L400 546A98 98 0 0 1 493 479A47 47 0 1 0 493 456A187 187 0 0 0 333.500 641A187 187 0 0 0 174 456" />
                <circle v-for="x in [264, 310, 357, 404]" :key="x" :cx="x" cy="466" r="23" />
                <path d="M668 486A23 23 0 0 0 704 466A23 23 0 0 0 751 466A23 23 0 0 0 798 466A23 23 0 0 0 835 486A187 187 0 0 0 751.500 641A187 187 0 0 0 668 486" />
                <path d="M964 456A47 47 0 1 1 964 479A98 98 0 0 0 871 546L964 577L992 641.500H805.500A187 187 0 0 1 964 456" />
                <path d="M47.500 856.500h15v15h-15zM55.500 856V791M48.500 791.500L55.500 772L61.500 791.500zM55.500 791V774M62 864.500H128M128.500 857.500L146 864.500L128.500 870.500z" />
              </g>
              <path class="hatching" d="M52 790L55.500 774L59 790M129 861L145 864.500L129 868M129 864.500H145" />
              <path class="cyan-line" d="M267 546L333.500 641L400 546" />
              <path
                class="green-line"
                d="M263.500 358V467M263 361.500H538M537.500 358V467M240.500 386V466M240 390.500H428M427.500 386V466M404 466.500H609M604.500 466V641M520 641.500H609M146.500 641V676M333.500 641V676M520.500 641V676M147 671.500H520M124 473L97 503M305 471L327 448M197 525L215 487M257 530L279 509M409 530L388 509M461 534L435 498M236 556A33 33 0 0 0 287 572M431 556A33 33 0 0 1 380 572M167 593A52 52 0 0 1 199 641M500 593A52 52 0 0 0 467 641"
              />
              <path v-for="(a, i) in arrows" :key="i" class="head" d="M0 0L-8 -2V3z" :transform="`translate(${a[0]} ${a[1]}) rotate(${a[2]})`" />
              <text v-for="(l, i) in labels" :key="'t' + i" class="label" y="3" :transform="`translate(${l[0]} ${l[1]}) rotate(${l[2]})`">{{ l[3] }}</text>
              <text class="axis" x="57" y="760">Y</text>
              <text class="axis" x="167" y="874">X</text>
            </svg>
            <div class="vscroll">
              <button class="raised" aria-label="scroll up"><svg viewBox="0 0 16 16" v-html="icons.up" /></button>
              <span class="before" /><span class="raised thumb" /><span class="after" />
              <button class="raised" aria-label="scroll down"><svg viewBox="0 0 16 16" v-html="icons.down" /></button>
            </div>
          </div>
          <div class="tabs">
            <button v-for="n in ['first', 'prev', 'next', 'last']" :key="n" class="nav raised" :aria-label="n">
              <svg viewBox="0 0 16 16" v-html="icons[n]" />
            </button>
            <button class="tab active"><T s="模型" /></button>
            <button class="tab"><T s="布局1" /></button>
            <button class="tab"><T s="布局2" /></button>
            <span class="grow" />
            <div class="hscroll">
              <button class="raised" aria-label="scroll left"><svg viewBox="0 0 16 16" v-html="icons.left" /></button>
              <span class="grow" /><span class="raised thumb" /><span class="rest" />
              <button class="raised" aria-label="scroll right"><svg viewBox="0 0 16 16" v-html="icons.rightA" /></button>
            </div>
          </div>
        </section>

        <aside class="side right">
          <div v-for="(bar, bi) in rightBars" :key="bi" class="vbar">
            <span class="vgrip"><i /><i /></span>
            <template v-for="(it, i) in bar" :key="i">
              <span v-if="it === '|'" class="vsep" />
              <button v-else class="vtool" :aria-label="it"><svg class="ic" viewBox="0 0 16 16" v-html="icons[it]" /></button>
            </template>
          </div>
        </aside>

        <aside class="palette">
          <div class="phead">
            <span class="pgrip"><i /><i /></span>
            <button class="raised pclose" aria-label="close palette"><svg viewBox="0 0 16 16" v-html="icons.close" /></button>
          </div>
          <div class="ptools">
            <div class="combo pick">
              <select aria-label="选择"><option>无选择</option></select>
              <span class="arrow raised"><svg viewBox="0 0 16 16" v-html="icons.down" /></span>
            </div>
            <button v-for="n in ['pickAdd', 'pickObj', 'quickSel']" :key="n" class="ptool" :aria-label="n">
              <svg class="ic" viewBox="0 0 16 16" v-html="icons[n]" />
            </button>
          </div>
          <section v-for="g in groups" :key="g.title" class="group">
            <h2>{{ g.title }}<svg viewBox="0 0 16 16" v-html="icons.chev" /></h2>
            <table>
              <tbody>
                <tr v-for="(r, i) in g.rows" :key="i">
                  <th scope="row"><div><T :s="r.k" /></div></th>
                  <td :class="{ edit: r.edit }">
                    <div><span v-if="r.mark" :class="'mark-' + r.mark" /><T :s="r.v" /></div>
                  </td>
                </tr>
              </tbody>
            </table>
          </section>
        </aside>
      </div>

      <section class="command">
        <span class="grip tall"><i /><i /></span>
        <div class="cbody">
          <div class="history">
            <div class="lines">
              <p><T s="[全部(A)/中心(C)/动态(D)/范围(E)/上一个(P)/比例(S)/窗口(W)/对象(O)] <实时>:" /></p>
              <p><T s="指定对角点:" /></p>
            </div>
            <div class="cscroll">
              <button class="raised" aria-label="history up"><svg viewBox="0 0 16 16" v-html="icons.up" /></button>
              <button class="raised" aria-label="history down"><svg viewBox="0 0 16 16" v-html="icons.down" /></button>
            </div>
          </div>
          <div class="prompt">
            <input v-model="command" aria-label="命令" />
            <div class="hscroll mini">
              <button class="raised" aria-label="command left"><svg viewBox="0 0 16 16" v-html="icons.left" /></button>
              <span class="raised thumb" /><span class="grow" />
              <button class="raised" aria-label="command right"><svg viewBox="0 0 16 16" v-html="icons.rightA" /></button>
            </div>
          </div>
        </div>
      </section>

      <footer class="status">
        <output class="coords"><T s="942.2671, 292.9444, 0.0000" /></output>
        <button v-for="m in modes" :key="m.s" class="mode" :class="{ on: m.on }" @click="m.on = !m.on"><T :s="m.s" /></button>
        <span class="grow" />
        <button class="lock" aria-label="lock"><svg class="ic" viewBox="0 0 16 16" v-html="icons.lockTray" /></button>
        <svg class="ic" viewBox="0 0 16 16" v-html="icons.down" />
        <svg class="ic" viewBox="0 0 16 16" v-html="icons.sizer" />
      </footer>
    </div>

    <div class="taskbar">
      <button class="start raised"><svg class="ic" viewBox="0 0 16 16" v-html="icons.flag" /><T s="开始" /></button>
      <span class="tsep" />
      <button v-for="n in ['ie', 'desktop', 'folder', 'media']" :key="n" class="tool" :aria-label="n">
        <svg class="ic" viewBox="0 0 16 16" v-html="icons[n]" />
      </button>
      <svg class="ic more" viewBox="0 0 16 16" v-html="icons.more" />
      <span class="tsep" />
      <button class="task pressed"><svg class="ic" viewBox="0 0 16 16" v-html="icons.acad" /><span><T s="AutoCAD 2006 - [E:\..." /></span></button>
      <button class="task raised"><svg class="ic" viewBox="0 0 16 16" v-html="icons.paint" /><span><T s="20.JPG - 画图" /></span></button>
      <span class="grow" />
      <span class="tsep" />
      <svg class="ic kb" viewBox="0 0 16 16" v-html="icons.keyboard" />
      <div class="tray">
        <svg v-for="n in ['less', 'search', 'plug', 'kasper', 'avira', 'net', 'shield']" :key="n" class="ic" viewBox="0 0 16 16" v-html="icons[n]" />
        <time><T s="12:39" /></time>
      </div>
    </div>
  </div>
</template>

<style>
body { margin: 0; background: #3a6ea5; }
.latin { font-family: "DejaVu Sans Mono", monospace; font-size: 10px; white-space: pre; }
.title .latin { font-size: 12px; }
.lines .latin { font-size: 13px; line-height: 1px; }
</style>

<style scoped>
* { box-sizing: border-box; }
.desktop { min-height: 100vh; display: flex; flex-direction: column; background: #d4d0c8; font: 12px/16px "Noto Sans CJK SC", sans-serif; color: #000; }
button { padding: 0; margin: 0; border: 0; background: none; font: inherit; color: inherit; display: flex; align-items: center; justify-content: center; flex: none; }
svg { display: block; flex: none; }
.ic { width: 16px; height: 16px; overflow: visible; shape-rendering: crispEdges; }
.grow { flex: 1; }
.raised { background: #d4d0c8; border: 1px solid; border-color: #fff #404040 #404040 #fff; box-shadow: inset -1px -1px #808080; }
.window { flex: 1; display: flex; flex-direction: column; padding: 3px 3px 0 4px; margin-right: 2px; border-bottom: 1px solid #404040; border-right: 1px solid #404040; overflow: hidden; background: #d4d0c8; box-shadow: 2px 0 #3a6ea5; }

.title { height: 18px; display: flex; align-items: center; padding: 0 1px 0 2px; background: linear-gradient(90deg, #0a246a, #a6caf0); color: #fff; }
.title h1 { flex: 1; margin: 0 0 0 2px; font-size: 12px; line-height: 18px; font-weight: 700; white-space: nowrap; }
.cap { width: 16px; height: 14px; background: #d4d0c8; border: 1px solid; border-color: #fff #404040 #404040 #fff; box-shadow: inset -1px -1px #808080; }
.cap svg { width: 12px; height: 12px; }
.cap.close { margin-left: 2px; }

.menu { height: 20px; display: flex; align-items: center; padding: 0 1px 0 4px; }
.item { padding: 0 6px; line-height: 18px; white-space: nowrap; }

.row { height: 28px; display: flex; gap: 2px; overflow: hidden; margin-left: 1px; }
.bar { display: flex; flex: none; align-items: center; height: 28px; padding-right: 3px; border: 1px solid; border-color: #fff #808080 #808080 #fff; }
.grip { display: flex; flex: none; width: 6px; margin: 0 4px 0 1px; height: 23px; }
.grip i { width: 3px; border: 1px solid; border-color: #fff #808080 #808080 #fff; }
.tool { width: 23px; height: 22px; }
.tool.narrow { width: 12px; }
.sep { flex: none; width: 2px; margin: 0 2px; height: 20px; border-left: 1px solid #808080; border-right: 1px solid #fff; }
.combo { flex: none; display: flex; align-items: center; height: 21px; margin: 0 1px; padding: 0 1px 0 2px; background: #fff; border: 1px solid; border-color: #606060 #e8e6e0 #e8e6e0 #606060; box-shadow: inset 1px 1px #808080; }
.combo select { flex: 1; min-width: 0; appearance: none; border: 0; padding: 0 1px; background: none; color: #000; font: 10px/16px "DejaVu Sans Mono", "Noto Sans CJK SC", monospace; }
.combo .stroke { width: 62px; margin: 0 1px 0 2px; border-top: 1px solid #000; }
.arrow { width: 15px; height: 17px; display: flex; align-items: center; justify-content: center; }
.arrow svg { width: 14px; height: 14px; flex: none; }

.main { flex: 1; display: flex; }
.side { width: 25px; margin-left: 1px; display: flex; flex-direction: column; gap: 2px; }
.side.right { margin-left: 2px; width: 27px; gap: 1px; }
.vbar { display: flex; flex-direction: column; align-items: center; padding-bottom: 4px; border: 1px solid; border-color: #fff #808080 #808080 #fff; }
.vgrip { align-self: stretch; display: flex; flex-direction: column; height: 6px; margin: 1px 2px 3px; }
.vgrip i, .pgrip i { height: 3px; border: 1px solid; border-color: #fff #808080 #808080 #fff; }
.vtool { width: 22px; height: 22px; }
.vsep { align-self: stretch; height: 2px; margin: 2px; border-top: 1px solid #808080; border-bottom: 1px solid #fff; }

.doc { flex: 1; min-width: 0; display: flex; flex-direction: column; border-left: 2px solid #505050; border-top: 2px solid #505050; }
.view { flex: 1; display: flex; min-height: 762px; background: #000; }
.canvas { flex: 1; min-width: 0; height: 100%; background: #000; }
.white-line, .green-line, .cyan-line { fill: none; stroke: #fff; shape-rendering: crispEdges; }
.green-line { stroke: #1fe01f; }
.cyan-line { stroke: #35d6c8; }
.hatching { fill: none; stroke: #999; }
.head { fill: #1fff1f; }
.label { fill: #f02bf0; font: 9px "Liberation Sans", sans-serif; text-anchor: middle; }
.axis { fill: #fff; font: 300 25px "Open Sans", sans-serif; text-anchor: middle; }
.vscroll, .hscroll, .cscroll { display: flex; background: repeating-conic-gradient(#fff 0 25%, #d4d0c8 0 50%) 0 0 / 2px 2px; }
.vscroll { flex-direction: column; width: 16px; }
.vscroll button, .hscroll button, .cscroll button, .thumb { width: 16px; height: 16px; flex: none; overflow: hidden; }
.vscroll svg, .hscroll svg, .cscroll svg { width: 14px; height: 14px; }
.before { flex: 402; }
.after { flex: 312; }
.tabs { height: 16px; display: flex; align-items: stretch; background: #d4d0c8; padding-right: 16px; }
.nav { width: 18px; height: 15px; }
.nav svg { width: 14px; height: 14px; }
.tab { position: relative; z-index: 0; padding: 0 6px 1px; line-height: 12px; height: 15px; }
.tab::before { content: ""; position: absolute; z-index: -1; inset: 0 -2px 0; border: 1px solid #000; border-top: 0; background: #d4d0c8; transform: perspective(20px) rotateX(-12deg); transform-origin: top; }
.nav + .tab { margin-left: 4px; }
.tab.active { color: #fff; z-index: 1; }
.tab.active::before { background: #000; }
.tabs .hscroll { width: 353px; height: 15px; border-left: 2px solid #808080; }
.rest { width: 40px; }

.palette { width: 138px; margin: 2px 0 1px 6px; padding: 6px 10px 0 7px; background: #ecebea; border-left: 2px solid #303030; }
.phead { display: flex; align-items: center; gap: 4px; margin-right: -4px; height: 10px; }
.pgrip { flex: 1; display: flex; flex-direction: column; }
.pclose { width: 11px; height: 11px; }
.pclose svg { width: 9px; height: 9px; }
.ptools { display: flex; align-items: center; height: 24px; margin: 6px -10px 11px 1px; }
.ptools .combo { width: 40px; height: 23px; margin: 0 6px 0 0; }
.ptools select { font: 12px/18px "Noto Sans CJK SC", sans-serif; padding: 0; }
.ptools .arrow { height: 19px; }
.ptool { width: 24px; height: 24px; border: 1px solid #d2d0cb; }
.group { margin: 0 0 7px 3px; width: 110px; }
.group h2 { display: flex; align-items: center; justify-content: space-between; margin: 0; height: 17px; padding: 0 9px 0 7px; font-size: 13px; line-height: 17px; color: #fff; background: #c5c1b9; border-radius: 6px 6px 0 0; }
.group h2 svg { width: 14px; height: 14px; }
table { width: 94px; margin-left: 16px; border-collapse: collapse; table-layout: fixed; }
th, td { height: 16px; padding: 0 0 0 3px; font-weight: 400; text-align: left; line-height: 15px; border: 1px solid #cbc8c2; }
tr:first-child > * { border-top: 0; }
th { width: 34px; }
td { padding-left: 1px; }
td.edit { background: #fff; }
th div, td div { display: flex; align-items: center; height: 15px; white-space: nowrap; }
.mark-box { width: 10px; height: 10px; margin: 0 6px 0 1px; border: 1px solid #000; }
.mark-line { width: 19px; margin: 0 5px 0 4px; border-top: 1px solid #000; }

.command { height: 60px; display: flex; padding: 5px 8px 0 5px; margin-right: -1px; border-top: 2px solid #fff; background: linear-gradient(#303030, #303030) 0 3px / 100% 2px no-repeat; }
.tall { height: 42px; margin: 6px 4px 0 1px; }
.cbody { flex: 1; min-width: 0; padding-top: 4px; }
.history { display: flex; height: 32px; background: #fff; border: 1px solid; border-width: 2px 1px 1px 2px; border-color: #303030 #fff #808080 #303030; }
.lines { flex: 1; min-width: 0; font-size: 16px; line-height: 14px; }
.lines p { margin: 0; height: 14px; white-space: nowrap; }
.cscroll { flex-direction: column; }
.cscroll button { height: 15px; }
.prompt { display: flex; height: 16px; padding-right: 16px; border-left: 2px solid #303030; }
.prompt input { flex: 1; min-width: 0; border: 0; padding: 0; background: #fff; font: 15px/16px "Noto Sans CJK SC", sans-serif; color: #000; }
.mini { width: 62px; }

.status { height: 27px; display: flex; align-items: center; gap: 4px; padding: 0 0 0 5px; border-top: 1px solid #808080; box-shadow: inset 0 1px #fff; white-space: nowrap; }
.coords { width: 250px; height: 18px; padding-left: 1px; line-height: 15px; border: 1px solid; border-color: #808080 #fff #fff #808080; }
.mode { height: 19px; padding: 0 1px; border: 1px solid; border-color: #fff #808080 #808080 #fff; }
.mode.on { border-color: #303030 #fff #fff #303030; }
.lock { width: 24px; height: 18px; border: 1px solid; border-color: #808080 #fff #fff #808080; }

.taskbar { height: 31px; display: flex; align-items: center; padding: 0 3px 0 2px; border-top: 1px solid #fff; white-space: nowrap; }
.start { width: 46px; height: 22px; gap: 2px; }
.tsep { width: 3px; height: 22px; margin: 0 4px 0 7px; border: 1px solid; border-color: #fff #808080 #808080 #fff; }
.more { margin-left: 14px; }
.more + .tsep { margin-left: 1px; }
.task { width: 160px; height: 22px; padding: 0 4px; gap: 4px; justify-content: flex-start; margin-right: 3px; }
.pressed { border: 1px solid; border-color: #404040 #fff #fff #404040; background: #e9e7e3; }
.kb { margin: 0 4px 0 3px; }
.tray { display: flex; align-items: center; gap: 2px; height: 22px; padding: 0 6px 0 0; border: 1px solid; border-color: #808080 #fff #fff #808080; }
.tray time { margin-left: 4px; }
</style>
